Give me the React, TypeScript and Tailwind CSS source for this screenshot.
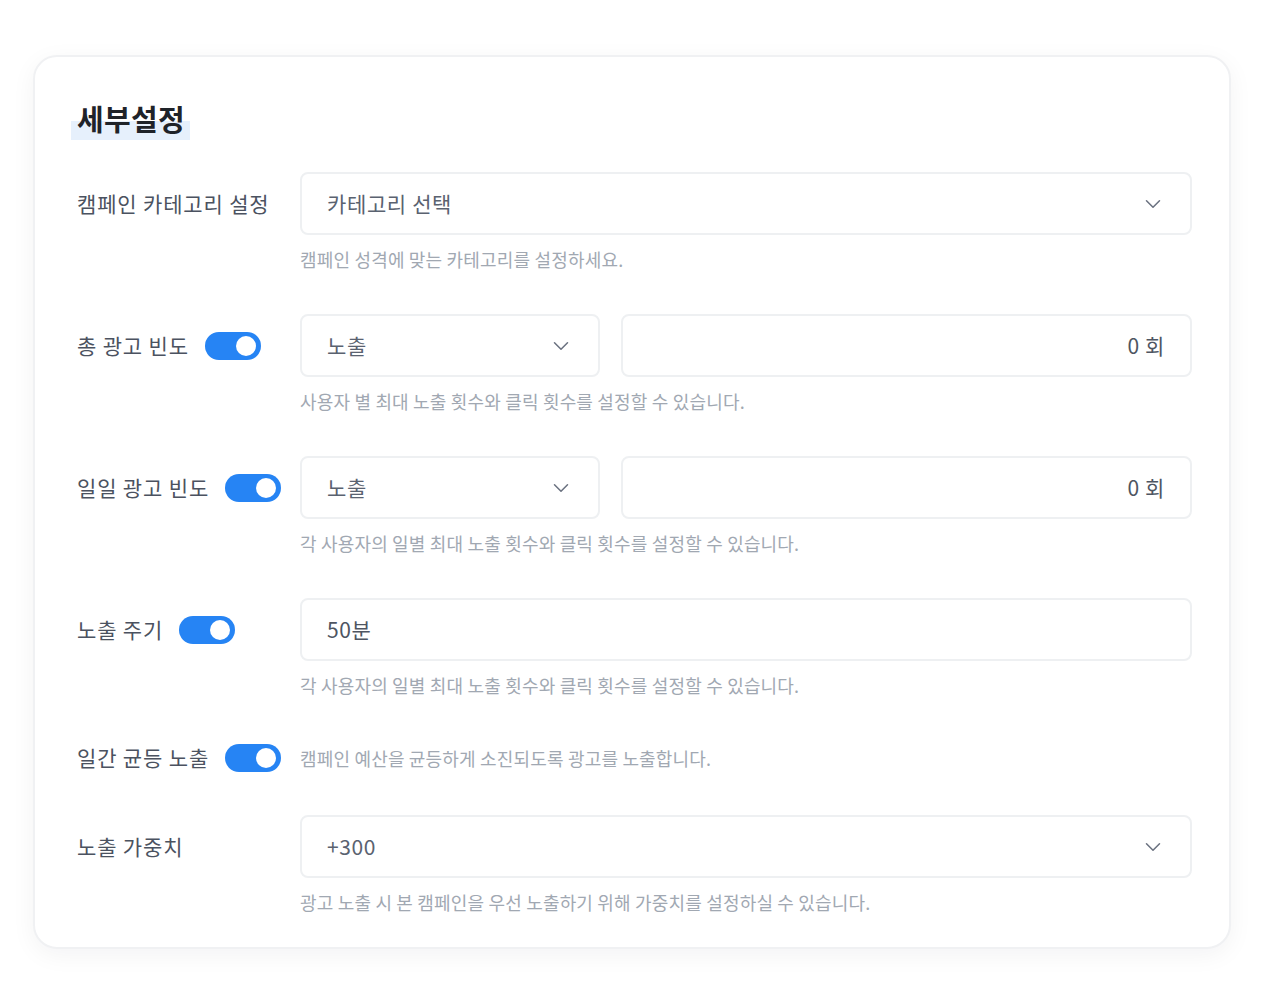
import { ChevronDown } from "lucide-react";

const font = { fontFamily: '"Noto Sans CJK KR", "Noto Sans", sans-serif' };

const Toggle = () => (
  <div className="flex h-[28px] w-[56px] shrink-0 items-center justify-end rounded-full bg-[#2684f4] pr-[5px]">
    <div className="h-[20px] w-[20px] rounded-full bg-white" />
  </div>
);

const Select = ({ value, className }: { value: string; className?: string }) => (
  <div
    className={`flex h-[63px] items-center justify-between rounded-[8px] border-2 border-[#eef0f2] bg-white pl-[25px] pr-[24px] ${className ?? ""}`}
  >
    <span className="text-[21px] tracking-[0.03em] text-[#5a6270]">{value}</span>
    <ChevronDown size={26} strokeWidth={1.4} className="text-[#6b7280]" />
  </div>
);

const Field = ({ value, right }: { value: string; right?: boolean }) => (
  <div
    className={`flex h-[63px] flex-1 items-center rounded-[8px] border-2 border-[#eef0f2] bg-white px-[25px] ${right ? "justify-end" : ""}`}
  >
    <span className="text-[21px] tracking-[0.03em] text-[#4e5562]">{value}</span>
  </div>
);

const Help = ({ children }: { children: React.ReactNode }) => (
  <p className="mt-[11px] text-[18px] leading-[26px] tracking-[0.01em] text-[#a1a8b2]">{children}</p>
);

const Label = ({ text, toggle }: { text: string; toggle?: boolean }) => (
  <div className="flex h-[63px] w-[223px] shrink-0 items-center gap-[16px]">
    <span className="text-[21px] tracking-[0.04em] text-[#4b5260]">{text}</span>
    {toggle && <Toggle />}
  </div>
);

const App = () => {
  return (
    <div className="min-h-[1000px] bg-white px-[33px] pt-[55px]" style={font}>
      <div className="rounded-[24px] border-2 border-[#f0f1f3] bg-white pb-[32px] pl-[42px] pr-[37px] pt-[43px] shadow-[0_6px_24px_rgba(17,24,39,0.05)]">
        <div className="relative inline-block">
          <span className="absolute bottom-[-4px] left-[-6px] right-[-5px] h-[19px] bg-[#e6f0fc]" />
          <h2 className="relative text-[29px] font-bold leading-[36px] tracking-[0.01em] text-[#1f2329]">
            세부설정
          </h2>
        </div>

        <div className="mt-[36px] flex">
          <Label text="캠페인 카테고리 설정" />
          <div className="flex-1">
            <Select value="카테고리 선택" />
            <Help>캠페인 성격에 맞는 카테고리를 설정하세요.</Help>
          </div>
        </div>

        <div className="mt-[42px] flex">
          <Label text="총 광고 빈도" toggle />
          <div className="flex-1">
            <div className="flex gap-[21px]">
              <Select value="노출" className="w-[300px]" />
              <Field value="0 회" right />
            </div>
            <Help>사용자 별 최대 노출 횟수와 클릭 횟수를 설정할 수 있습니다.</Help>
          </div>
        </div>

        <div className="mt-[42px] flex">
          <Label text="일일 광고 빈도" toggle />
          <div className="flex-1">
            <div className="flex gap-[21px]">
              <Select value="노출" className="w-[300px]" />
              <Field value="0 회" right />
            </div>
            <Help>각 사용자의 일별 최대 노출 횟수와 클릭 횟수를 설정할 수 있습니다.</Help>
          </div>
        </div>

        <div className="mt-[42px] flex">
          <Label text="노출 주기" toggle />
          <div className="flex-1">
            <div className="flex">
              <Field value="50분" />
            </div>
            <Help>각 사용자의 일별 최대 노출 횟수와 클릭 횟수를 설정할 수 있습니다.</Help>
          </div>
        </div>

        <div className="mt-[42px] flex h-[36px] items-center">
          <div className="flex w-[223px] shrink-0 items-center gap-[16px]">
            <span className="text-[21px] tracking-[0.04em] text-[#4b5260]">일간 균등 노출</span>
            <Toggle />
          </div>
          <p className="text-[18px] tracking-[0.01em] text-[#a1a8b2]">
            캠페인 예산을 균등하게 소진되도록 광고를 노출합니다.
          </p>
        </div>

        <div className="mt-[39px] flex">
          <Label text="노출 가중치" />
          <div className="flex-1">
            <Select value="+300" />
            <Help>광고 노출 시 본 캠페인을 우선 노출하기 위해 가중치를 설정하실 수 있습니다.</Help>
          </div>
        </div>
      </div>
    </div>
  );
};

export default App;
